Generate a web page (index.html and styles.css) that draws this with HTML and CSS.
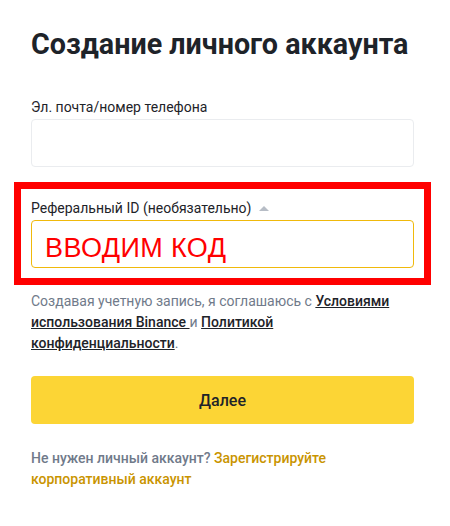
FILE: index.html
```html
<!DOCTYPE html>
<html lang="ru">
<head>
<meta charset="utf-8">
<link rel="stylesheet" href="styles.css">
</head>
<body>
<main class="page">
  <h1 class="title">Создание личного аккаунта</h1>
  <div class="field field-email">
    <label class="label">Эл. почта/номер телефона</label>
    <div class="input"></div>
  </div>
  <div class="highlight">
    <div class="field">
      <label class="label">Реферальный ID (необязательно) <span class="caret"></span></label>
      <div class="input input-active"><span class="code">ВВОДИМ КОД</span></div>
    </div>
  </div>
  <p class="terms">Создавая учетную запись, я соглашаюсь с <a class="tlink">Условиями использования Binance </a> и <a class="tlink">Политикой конфиденциальности</a>.</p>
  <button class="btn">Далее</button>
  <p class="corp">Не нужен личный аккаунт? <a class="clink">Зарегистрируйте корпоративный аккаунт</a></p>
</main>
</body>
</html>
```
FILE: styles.css
```css
* { box-sizing: border-box; }
html, body { margin: 0; background: #fff; }
body { font-family: Roboto, "Liberation Sans", sans-serif; color: #1E2329; }
.page { width: 450px; padding: 24px 36px 0 31px; }
.title { margin: 0; font-size: 28.7px; font-weight: 700; line-height: 40px; color: #1E2329; white-space: nowrap; }
.field { display: flex; flex-direction: column; }
.field-email { margin-top: 33px; }
.label { font-size: 14px; line-height: 20px; color: #1E2329; margin-bottom: 2px; display: flex; align-items: center; gap: 8px; }
.caret { width: 0; height: 0; border-left: 5px solid transparent; border-right: 5px solid transparent; border-bottom: 5px solid #B7BDC6; }
.input { height: 48px; border: 1px solid #EAECEF; border-radius: 4px; display: flex; align-items: center; padding: 0 12px; }
.input-active { border-color: #F0B90B; align-items: flex-end; padding-bottom: 3px; padding-left: 13px; }
.code { font-family: "Liberation Sans", sans-serif; font-size: 27px; color: #FF0000; letter-spacing: 0.4px; }
.highlight { margin: 15px -17px 0 -17px; border: 7px solid #FF0000; padding: 9px 10px 10px 10px; }
.terms { margin: 6px 0 0 0; font-size: 14px; line-height: 21px; color: #707A8A; }
.tlink { color: #1E2329; font-weight: 500; text-decoration: underline; }
.btn { display: block; width: 100%; margin-top: 22px; height: 48px; border: 0; border-radius: 4px; background: #FCD535; font-family: inherit; font-size: 16px; font-weight: 500; color: #1E2329; }
.corp { margin: 24px 0 0 0; font-size: 14px; line-height: 21px; color: #707A8A; font-weight: 500; }
.clink { color: #C99400; }
```
